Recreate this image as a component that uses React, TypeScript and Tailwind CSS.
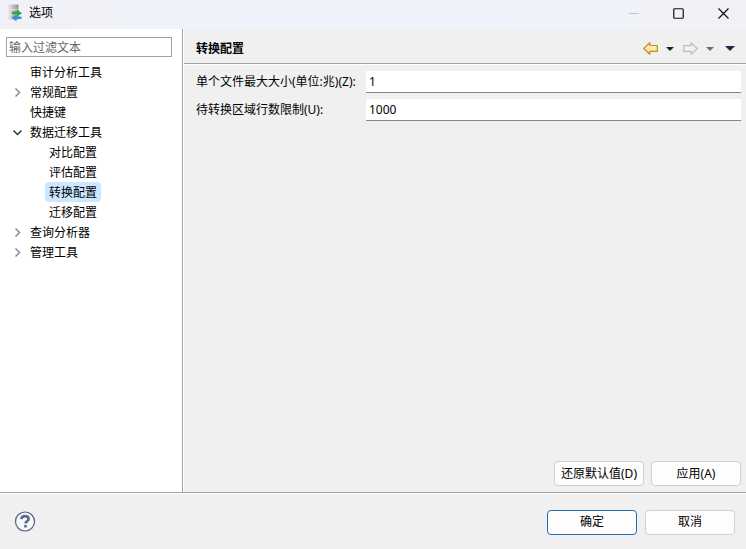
import React, { useState } from 'react';

type TreeNode = {
    id: string;
    label: string;
    children?: TreeNode[];
};

const tree: TreeNode[] = [
    { id: 'audit', label: '审计分析工具' },
    { id: 'general', label: '常规配置', children: [] },
    { id: 'keys', label: '快捷键' },
    {
        id: 'migration',
        label: '数据迁移工具',
        children: [
            { id: 'compare', label: '对比配置' },
            { id: 'evaluate', label: '评估配置' },
            { id: 'convert', label: '转换配置' },
            { id: 'migrate', label: '迁移配置' },
        ],
    },
    { id: 'query', label: '查询分析器', children: [] },
    { id: 'admin', label: '管理工具', children: [] },
];

function AppIcon() {
    return (
        <svg width="16" height="18" viewBox="0 0 16 18" aria-hidden="true">
            <defs>
                <linearGradient id="server" x1="0" x2="1">
                    <stop offset="0" stopColor="#ececec" />
                    <stop offset="0.45" stopColor="#c4c4c4" />
                    <stop offset="1" stopColor="#8f8f8f" />
                </linearGradient>
            </defs>
            <rect x="1" y="0.5" width="10.5" height="4.7" rx="0.5" fill="url(#server)" />
            <rect x="1" y="5.7" width="10.5" height="4.6" rx="0.5" fill="url(#server)" />
            <rect x="1" y="10.8" width="10.5" height="4.7" rx="0.5" fill="url(#server)" />
            <path d="M5 7.8h5V5.6l5 3.6-5 3.4v-2.2H5z" fill="#2fa34a" />
            <path d="M14.5 12.4h-5v-2.2L4.4 13.8l5.1 3.6v-2.3h5z" fill="#3f8fd6" />
        </svg>
    );
}

function Chevron({ open }: { open: boolean }) {
    return (
        <svg width="11" height="11" viewBox="0 0 11 11" fill="none" strokeWidth="1.5" aria-hidden="true">
            {open ? (
                <path d="M1.5 3.5l4 4 4-4" stroke="#333333" />
            ) : (
                <path d="M3.5 1.5l4 4-4 4" stroke="#8a8a8a" />
            )}
        </svg>
    );
}

function Caret({ color }: { color: string }) {
    return (
        <svg width="8" height="4" viewBox="0 0 8 4" aria-hidden="true">
            <path d="M0 0h8L4 4z" fill={color} />
        </svg>
    );
}

function TreeItem({
    node,
    level,
    selected,
    onSelect,
}: {
    node: TreeNode;
    level: number;
    selected: string;
    onSelect: (id: string) => void;
}) {
    const [open, setOpen] = useState(node.id === 'migration');

    return (
        <li>
            <div className={level === 0 ? 'flex h-5 items-center pl-3' : 'flex h-5 items-center pl-[31px]'}>
                <span className="flex w-[14px] shrink-0">
                    {node.children && (
                        <button type="button" aria-label={node.label} aria-expanded={open} onClick={() => setOpen(!open)}>
                            <Chevron open={open} />
                        </button>
                    )}
                </span>
                <button
                    type="button"
                    onClick={() => onSelect(node.id)}
                    className={
                        node.id === selected
                            ? 'h-5 whitespace-nowrap rounded-sm bg-[#cce8ff] px-1 pt-px leading-5'
                            : 'h-5 whitespace-nowrap rounded-sm px-1 pt-px leading-5'
                    }
                >
                    {node.label}
                </button>
            </div>
            {open && node.children && (
                <ul>
                    {node.children.map((child) => (
                        <TreeItem key={child.id} node={child} level={level + 1} selected={selected} onSelect={onSelect} />
                    ))}
                </ul>
            )}
        </li>
    );
}

function Field({ id, label, value }: { id: string; label: string; value: string }) {
    return (
        <div className="flex items-center">
            <label htmlFor={id} className="w-[170px] shrink-0 whitespace-nowrap">
                {label}
            </label>
            <input
                id={id}
                type="text"
                defaultValue={value}
                className="h-[22px] min-w-0 flex-1 border-b border-[#868686] bg-white px-[3px] outline-none"
            />
        </div>
    );
}

function PushButton({ children, primary }: { children: React.ReactNode; primary?: boolean }) {
    return (
        <button
            type="button"
            className={
                primary
                    ? 'h-[25px] w-[90px] whitespace-nowrap rounded border border-[#1a6fb5] bg-[#fdfdfd]'
                    : 'h-[25px] w-[90px] whitespace-nowrap rounded border border-[#d0d0d0] bg-[#fdfdfd]'
            }
        >
            {children}
        </button>
    );
}

export default function App() {
    const [selected, setSelected] = useState('convert');

    return (
        <div className="flex min-h-screen flex-col bg-[#f0f0f0] font-['Noto_Sans','Noto_Sans_CJK_SC',sans-serif] text-[12px] leading-4 text-black">
            <header className="flex h-[29px] items-center bg-linear-to-r from-[#f1f2f7] via-[#eef3fc] to-[#f1f2f7] pb-[3px] pl-[7px]">
                <AppIcon />
                <h1 className="flex-1 pl-[6px]">选项</h1>
                <div className="flex h-full items-center">
                    <button type="button" aria-label="最小化" className="flex h-full w-[45px] items-center justify-center">
                        <svg width="10" height="10" viewBox="0 0 10 10">
                            <path d="M0 5.5h10" stroke="#c3c5ca" />
                        </svg>
                    </button>
                    <button type="button" aria-label="最大化" className="flex h-full w-[45px] items-center justify-center">
                        <svg width="11" height="11" viewBox="0 0 11 11" fill="none">
                            <rect x="0.75" y="0.75" width="9.5" height="9.5" rx="1" stroke="#111111" strokeWidth="1.2" />
                        </svg>
                    </button>
                    <button type="button" aria-label="关闭" className="flex h-full w-[45px] items-center justify-center">
                        <svg width="11" height="11" viewBox="0 0 11 11">
                            <path d="M0.5 0.5l10 10M10.5 0.5l-10 10" stroke="#111111" strokeWidth="1.2" />
                        </svg>
                    </button>
                </div>
            </header>

            <div className="flex flex-1">
                <nav className="w-[183px] shrink-0 border-r border-[#a0a0a0] bg-white">
                    <div className="px-[6px] pt-2 pr-[10px]">
                        <input
                            type="text"
                            aria-label="输入过滤文本"
                            placeholder="输入过滤文本"
                            className="block h-5 w-full border border-[#a0a0a0] bg-white px-[2px] outline-none placeholder:text-[#666666]"
                        />
                    </div>
                    <ul className="pt-[5px]">
                        {tree.map((node) => (
                            <TreeItem key={node.id} node={node} level={0} selected={selected} onSelect={setSelected} />
                        ))}
                    </ul>
                </nav>

                <main className="flex min-w-0 flex-1 flex-col border-l border-white">
                    <div className="flex h-9 items-center justify-between border-b border-white pt-1 pl-3 shadow-[inset_0_-1px_0_#a0a0a0]">
                        <h2 className="font-bold">转换配置</h2>
                        <div className="flex items-center pr-[11px]">
                            <button type="button" aria-label="后退" className="mr-2">
                                <svg width="15" height="13" viewBox="0 0 15 13">
                                    <path
                                        d="M0.8 6.5L6.8 0.7v3h7.5v5.6H6.8v3z"
                                        fill="#fde9a6"
                                        stroke="#c08c1e"
                                        strokeWidth="1.2"
                                        strokeLinejoin="round"
                                    />
                                    <path d="M2.6 6.3L5.8 3.2v1.5h7.4" fill="none" stroke="#fff8dc" strokeWidth="0.9" />
                                </svg>
                            </button>
                            <button type="button" aria-label="后退历史" className="mr-[9px]">
                                <Caret color="#222222" />
                            </button>
                            <button type="button" aria-label="前进" className="mr-2">
                                <svg width="15" height="13" viewBox="0 0 15 13">
                                    <path
                                        d="M14.2 6.5L8.2 0.7v3H0.7v5.6h7.5v3z"
                                        fill="#f3f3ef"
                                        stroke="#bdbdb8"
                                        strokeWidth="1.2"
                                        strokeLinejoin="round"
                                    />
                                </svg>
                            </button>
                            <button type="button" aria-label="前进历史" className="mr-[11px]">
                                <Caret color="#6e6e6e" />
                            </button>
                            <button type="button" aria-label="菜单">
                                <svg width="10" height="5" viewBox="0 0 10 5">
                                    <path d="M0 0h10L5 5z" fill="#23234f" />
                                </svg>
                            </button>
                        </div>
                    </div>
                    <form className="flex flex-col gap-[6px] pt-[6px] pr-[5px] pl-3">
                        <Field id="max-size" label="单个文件最大大小(单位:兆)(Z):" value="1" />
                        <Field id="max-rows" label="待转换区域行数限制(U):" value="1000" />
                    </form>
                    <div className="mt-auto flex justify-end gap-[7px] pr-[5px] pb-[6px]">
                        <PushButton>还原默认值(D)</PushButton>
                        <PushButton>应用(A)</PushButton>
                    </div>
                </main>
            </div>

            <footer className="flex h-[57px] items-center justify-between border-t border-[#a0a0a0] pt-[2px] pr-[11px] pl-[14px] shadow-[inset_0_1px_0_#ffffff]">
                <button type="button" aria-label="帮助">
                    <svg width="22" height="22" viewBox="0 0 22 22" fill="none">
                        <circle cx="11" cy="10.5" r="9.5" fill="#f7f8fa" stroke="#56647f" strokeWidth="1.2" />
                        <path d="M7.4 8.1c.2-2 1.6-3 3.6-3s3.6 1.1 3.6 2.9c0 2.3-3.1 2.4-3.1 4.4" stroke="#5d6c8e" strokeWidth="2.6" />
                        <rect x="10.1" y="14" width="2.7" height="2.5" fill="#5d6c8e" />
                    </svg>
                </button>
                <div className="flex gap-2">
                    <PushButton primary>确定</PushButton>
                    <PushButton>取消</PushButton>
                </div>
            </footer>
        </div>
    );
}
